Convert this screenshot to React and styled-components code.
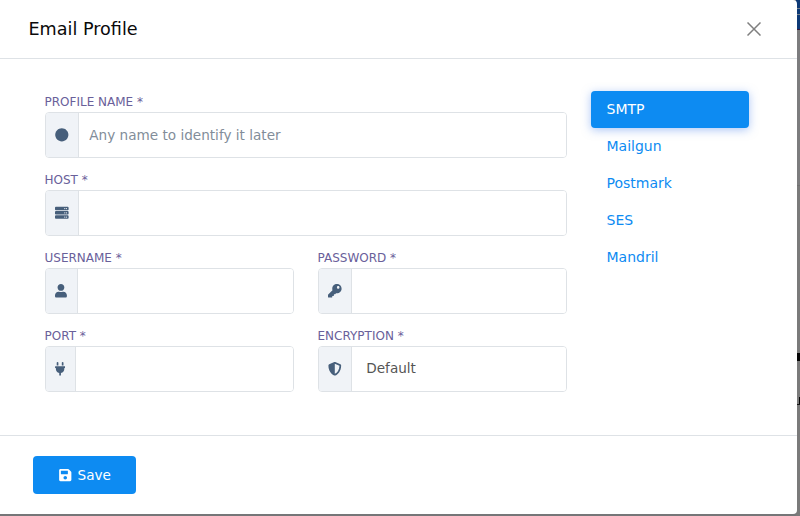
import React from "react";
import styled, { createGlobalStyle } from "styled-components";
import { FaCircle, FaServer, FaUser, FaKey, FaPlug, FaShieldAlt, FaSave } from "react-icons/fa";

const GlobalStyle = createGlobalStyle`
  *, *::before, *::after { box-sizing: border-box; }
  body { margin: 0; overflow: hidden; font-family: "DejaVu Sans", sans-serif; font-size: 14px; }
`;

const Page = styled.div`
  position: relative;
  width: 800px;
  height: 516px;
  background: #757678;
`;

const PageEdge = styled.div`
  position: absolute;
  top: 0;
  right: 0;
  width: 4px;
  height: 516px;
  background: linear-gradient(#0d3976 0 29px, #391a3d 29px 30px, #7c7c7e 30px 185px, #707070 185px 186px, #7a7a7a 186px);
`;

const EdgeMark = styled.div`
  position: absolute;
  right: 0;
  top: ${(p) => p.$top}px;
  width: ${(p) => p.$width || 3}px;
  height: ${(p) => p.$height}px;
  background: ${(p) => p.$color};
`;

const Modal = styled.form`
  position: relative;
  display: flex;
  flex-direction: column;
  width: 797px;
  height: 514px;
  background: #fff;
  border-radius: 0 4px 4px 0;
`;

const Header = styled.header`
  display: flex;
  align-items: center;
  justify-content: space-between;
  height: 59px;
  padding: 0 36px 0 28.5px;
  border-bottom: 1px solid #dee2e6;
`;

const Title = styled.h5`
  margin: 0;
  font-size: 17.6px;
  font-weight: 400;
  line-height: 26px;
  color: #0a0a0a;
`;

const CloseButton = styled.button`
  display: flex;
  padding: 0;
  border: 0;
  background: none;
  color: #7f7f7f;
`;

const Body = styled.div`
  display: flex;
  gap: 24px;
  height: 376px;
  padding: 32px 48px 0 45px;
`;

const Fields = styled.div`
  display: grid;
  grid-template-columns: 249px 249px;
  grid-auto-rows: 67px;
  gap: 11px 24px;
  width: 522px;
`;

const Field = styled.div`
  grid-column: ${(p) => (p.$wide ? "1 / -1" : "auto")};
`;

const Label = styled.label`
  display: block;
  height: 21px;
  margin-left: -0.5px;
  padding-top: 1px;
  line-height: 21px;
  font-size: 12px;
  color: #69609a;
  text-transform: uppercase;
`;

const InputGroup = styled.div`
  display: flex;
  height: 46px;
  border: 1px solid #dee2e6;
  border-radius: 4px;
  overflow: hidden;
`;

const Addon = styled.span`
  display: flex;
  align-items: center;
  flex: none;
  padding: 0 9.5px 0 9.2px;
  border-right: 1px solid #dee2e6;
  background: #f0f3f7;
  color: #475f7b;

  svg {
    width: ${(p) => p.$icon}px;
    height: 13.6px;
  }
`;

const control = `
  flex: 1;
  min-width: 0;
  border: 0;
  outline: 0;
  background: #fff;
  font: 13.6px "DejaVu Sans", sans-serif;
`;

const Input = styled.input`
  ${control}
  padding: 0 10px;
  color: #475f7b;

  &::placeholder { color: #828d99; opacity: 1; }
`;

const Select = styled.select`
  ${control}
  appearance: none;
  padding: 0 14px 2px;
  color: #555;
`;

const Providers = styled.nav`
  width: 158px;
`;

const Provider = styled.a`
  display: block;
  height: 37px;
  padding-left: 15.5px;
  border-radius: 4px;
  line-height: 37px;
  color: ${(p) => (p.$active ? "#fff" : "#0d8bf2")};
  background: ${(p) => (p.$active ? "#0d8bf2" : "transparent")};
  box-shadow: ${(p) => (p.$active ? "0 2px 10px rgba(90, 141, 238, 0.5)" : "none")};
`;

const Footer = styled.footer`
  display: flex;
  height: 79px;
  padding: 20px 33px;
  border-top: 1px solid #dee2e6;
`;

const SaveButton = styled.button`
  display: flex;
  align-items: center;
  justify-content: center;
  gap: 6px;
  width: 103px;
  height: 38px;
  padding: 0 0 0 1px;
  border: 0;
  border-radius: 4px;
  background: #0d8bf2;
  color: #fff;
  font: 13.6px "DejaVu Sans", sans-serif;

  svg { width: 12.5px; height: 14px; }
`;

const fields = [
  { label: "Profile Name *", icon: FaCircle, size: 13.6, wide: true, placeholder: "Any name to identify it later" },
  { label: "Host *", icon: FaServer, size: 13.6, wide: true },
  { label: "Username *", icon: FaUser, size: 11.9 },
  { label: "Password *", icon: FaKey, size: 13.6 },
  { label: "Port *", icon: FaPlug, size: 10.2 },
  { label: "Encryption *", icon: FaShieldAlt, size: 13.6, options: ["Default"] },
];

const providers = ["SMTP", "Mailgun", "Postmark", "SES", "Mandril"];

export default function App() {
  return (
    <Page>
      <GlobalStyle />
      <PageEdge>
        <EdgeMark $top={8} $height={1} $color="#75818f" />
        <EdgeMark $top={14} $height={1} $color="#75818f" />
        <EdgeMark $top={353} $height={8} $color="#050505" />
        <EdgeMark $top={397} $height={8} $width={1} $color="#050505" />
        <EdgeMark $top={404} $height={1} $color="#151515" />
      </PageEdge>
      <Modal>
        <Header>
          <Title>Email Profile</Title>
          <CloseButton type="button" aria-label="Close">
            <svg width="14" height="14" viewBox="0 0 14 14" fill="none" stroke="currentColor" strokeWidth="1.5">
              <path d="M.5.5l13 13M13.5.5l-13 13" />
            </svg>
          </CloseButton>
        </Header>
        <Body>
          <Fields>
            {fields.map(({ label, icon: Icon, size, wide, placeholder, options }) => (
              <Field key={label} $wide={wide}>
                <Label>{label}</Label>
                <InputGroup>
                  <Addon $icon={size}><Icon /></Addon>
                  {options ? (
                    <Select aria-label={label}>
                      {options.map((o) => <option key={o}>{o}</option>)}
                    </Select>
                  ) : (
                    <Input aria-label={label} placeholder={placeholder} />
                  )}
                </InputGroup>
              </Field>
            ))}
          </Fields>
          <Providers>
            {providers.map((name, i) => (
              <Provider key={name} $active={i === 0}>{name}</Provider>
            ))}
          </Providers>
        </Body>
        <Footer>
          <SaveButton type="button"><FaSave />Save</SaveButton>
        </Footer>
      </Modal>
    </Page>
  );
}
